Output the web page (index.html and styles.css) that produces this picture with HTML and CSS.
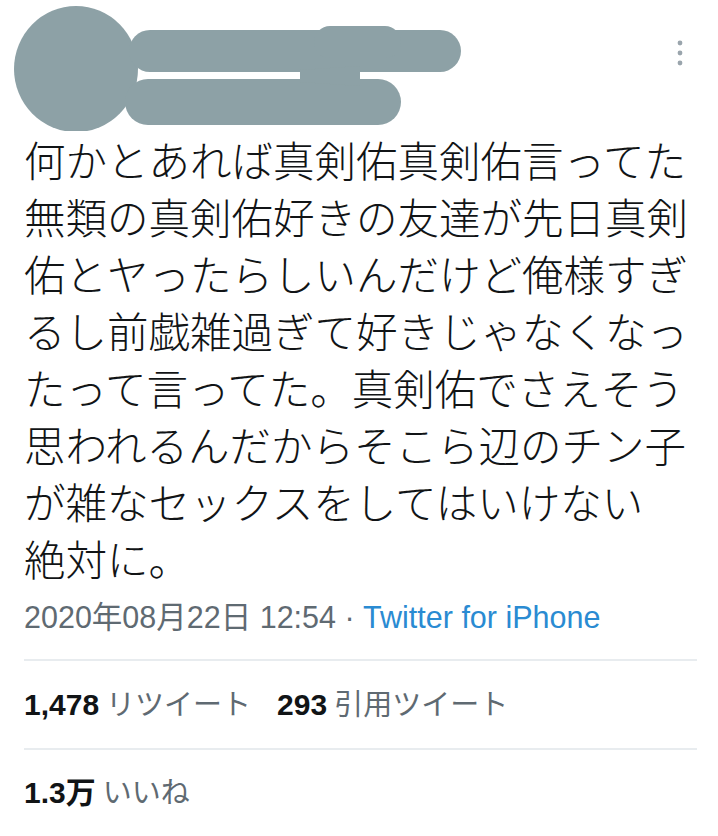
FILE: index.html
```html
<!DOCTYPE html>
<html lang="ja">
<head>
<meta charset="utf-8">
<link rel="stylesheet" href="styles.css">
</head>
<body>
<header class="head">
  <svg class="redact" width="470" height="131" viewBox="0 0 470 131" aria-hidden="true">
    <g fill="#8da1a6" stroke="#8da1a6" stroke-linecap="round" stroke-linejoin="round">
      <ellipse cx="76" cy="69" rx="62" ry="63" stroke="none"/>
      <line x1="150" y1="51" x2="440" y2="51" stroke-width="42"/>
      <line x1="330" y1="42" x2="385" y2="42" stroke-width="32"/>
      <line x1="148" y1="102" x2="378" y2="102" stroke-width="46"/>
      <polygon points="300,70 360,66 360,86 300,82" stroke="none"/>
    </g>
  </svg>
  <svg class="more" width="10" height="30" viewBox="0 0 10 30" aria-hidden="true">
    <circle cx="5" cy="5" r="2.4" fill="#9aa5ad"/>
    <circle cx="5" cy="15" r="2.4" fill="#9aa5ad"/>
    <circle cx="5" cy="25" r="2.4" fill="#9aa5ad"/>
  </svg>
</header>
<main class="tweet">
  <p class="text">何かとあれば真剣佑真剣佑言ってた無類の真剣佑好きの友達が先日真剣佑とヤったらしいんだけど俺様すぎるし前戯雑過ぎて好きじゃなくなったって言ってた。真剣佑でさえそう思われるんだからそこら辺のチン子が雑なセックスをしてはいけない<br>絶対に。</p>
  <div class="time">2020年08月22日 12:54 · <span class="src">Twitter for iPhone</span></div>
  <div class="stat"><b>1,478</b> <span>リツイート</span><span class="gap"></span><b>293</b> <span>引用ツイート</span></div>
  <div class="stat last"><b>1.3万</b> <span>いいね</span></div>
</main>
</body>
</html>
```
FILE: styles.css
```css
* { box-sizing: border-box; margin: 0; padding: 0; }
html, body { background: #ffffff; }
body {
  width: 718px;
  font-family: "Noto Sans CJK JP", "Noto Sans", sans-serif;
  color: #14171a;
}
.head {
  height: 131px;
  display: flex;
  justify-content: space-between;
  align-items: flex-start;
  padding-right: 33px;
}
.redact { display: block; }
.more { display: block; margin-top: 38px; }
.tweet { padding: 0 21px 0 24px; }
.text {
  font-size: 41.5px;
  line-height: 57px;
  font-weight: 300;
  color: #111416;
}
.time {
  margin-top: 8px;
  font-family: "Liberation Sans", "Noto Sans CJK JP", sans-serif;
  font-size: 30.5px;
  line-height: 44px;
  color: #5f6a72;
  padding-bottom: 20px;
  border-bottom: 2px solid #e8ecef;
}
.src { color: #2a8bd2; }
.stat {
  font-family: "Liberation Sans", "Noto Sans CJK JP", sans-serif;
  font-size: 29px;
  line-height: 44px;
  color: #5f6a72;
  padding: 22px 0 21px;
  border-bottom: 2px solid #e8ecef;
  display: flex;
  align-items: baseline;
  gap: 7px;
}
.stat b { color: #111416; font-weight: 700; font-size: 30px; }
.stat .gap { width: 12px; }
.stat.last { border-bottom: none; padding-top: 21px; }
```
